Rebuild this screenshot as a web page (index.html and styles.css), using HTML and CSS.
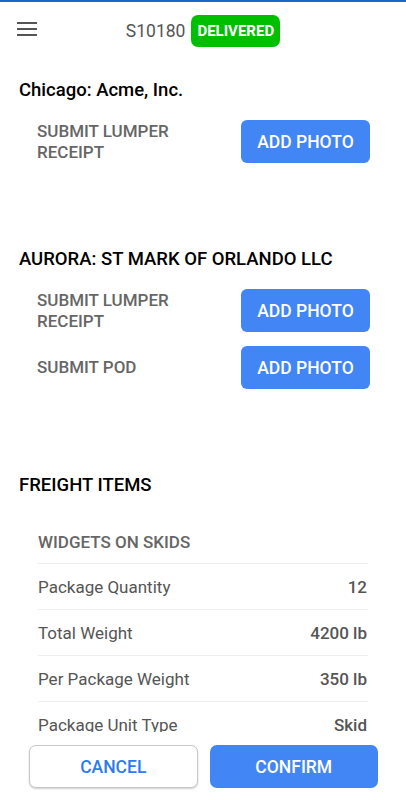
FILE: index.html
```html
<!DOCTYPE html>
<html lang="en">
<head>
    <meta charset="UTF-8">
    <meta name="viewport" content="width=device-width, initial-scale=1.0">
    <title>S10180</title>
    <link rel="stylesheet" href="styles.css">
</head>
<body>
    <div class="topbar">
        <button class="menu">
            <svg width="20" height="14" viewBox="0 0 20 14">
                <rect x="0" y="0" width="20" height="2" fill="#555"/>
                <rect x="0" y="6" width="20" height="2" fill="#555"/>
                <rect x="0" y="12" width="20" height="2" fill="#555"/>
            </svg>
        </button>
        <div class="title">
            <span class="shipment">S10180</span>
            <span class="badge">DELIVERED</span>
        </div>
    </div>

    <div class="content">
        <div class="stop">
            <h2>Chicago: Acme, Inc.</h2>
            <div class="doc-row">
                <span class="doc-label">SUBMIT LUMPER RECEIPT</span>
                <button class="btn-photo">ADD PHOTO</button>
            </div>
        </div>

        <div class="stop">
            <h2>AURORA: ST MARK OF ORLANDO LLC</h2>
            <div class="doc-row">
                <span class="doc-label">SUBMIT LUMPER RECEIPT</span>
                <button class="btn-photo">ADD PHOTO</button>
            </div>
            <div class="doc-row">
                <span class="doc-label">SUBMIT POD</span>
                <button class="btn-photo">ADD PHOTO</button>
            </div>
        </div>

        <div class="stop">
            <h2>FREIGHT ITEMS</h2>
            <div class="freight">
                <div class="freight-row freight-head">WIDGETS ON SKIDS</div>
                <div class="freight-row">
                    <span>Package Quantity</span>
                    <span class="value">12</span>
                </div>
                <div class="freight-row">
                    <span>Total Weight</span>
                    <span class="value">4200 lb</span>
                </div>
                <div class="freight-row">
                    <span>Per Package Weight</span>
                    <span class="value">350 lb</span>
                </div>
                <div class="freight-row">
                    <span>Package Unit Type</span>
                    <span class="value">Skid</span>
                </div>
                <div class="freight-row">
                    <span>Hazardous</span>
                    <span class="value">No</span>
                </div>
            </div>
        </div>
    </div>

    <div class="actions">
        <button class="btn-cancel">CANCEL</button>
        <button class="btn-confirm">CONFIRM</button>
    </div>
</body>
</html>
```

FILE: styles.css
```css
html{
    background-color: white;
}
body{
    margin: 0;
    font-family: Roboto, "Liberation Sans", sans-serif;
    color: #222;
}
button{
    font-family: Roboto, "Liberation Sans", sans-serif;
    cursor: pointer;
}
.topbar{
    border-top: 2px solid #1769c4;
    height: 58px;
    display: flex;
    align-items: center;
    justify-content: center;
    position: relative;
}
.menu{
    position: absolute;
    left: 17px;
    top: 20px;
    border: none;
    background: none;
    padding: 0;
    display: flex;
}
.title{
    display: flex;
    align-items: center;
    gap: 6px;
}
.shipment{
    font-size: 17.5px;
    color: #555;
}
.badge{
    background-color: #00bf00;
    color: white;
    font-weight: 700;
    font-size: 15px;
    border-radius: 7px;
    height: 32px;
    line-height: 32px;
    padding: 0 6px;
}
.content{
    padding: 18px 19px 90px 19px;
}
.stop{
    margin-bottom: 84px;
}
h2{
    font-size: 18.5px;
    font-weight: 500;
    line-height: 24px;
    margin: 0 0 18px 0;
    color: #000;
}
.doc-row{
    display: flex;
    align-items: center;
    justify-content: space-between;
    margin: 0 17px 14px 18px;
}
.doc-label{
    font-size: 17px;
    font-weight: 500;
    color: #666;
    line-height: 21px;
    max-width: 170px;
}
.btn-photo{
    width: 129px;
    height: 43px;
    border: none;
    border-radius: 6px;
    background-color: #4285f4;
    color: white;
    font-size: 17.5px;
    font-weight: 500;
}
.freight{
    margin: 21px 19px 0 19px;
}
.freight-row{
    height: 44px;
    border-bottom: 1px solid #eee;
    display: flex;
    align-items: center;
    justify-content: space-between;
    font-size: 17px;
    color: #555;
    padding-top: 1px;
}
.freight-head{
    font-weight: 500;
    color: #666;
    padding-top: 3px;
    height: 42px;
}
.value{
    font-weight: 500;
    padding-right: 1px;
}
.actions{
    position: fixed;
    left: 0;
    right: 0;
    bottom: 0;
    background-color: white;
    padding: 13px 28px 12px 29px;
    display: grid;
    grid-template-columns: 1fr 1fr;
    gap: 12px;
}
.btn-cancel, .btn-confirm{
    height: 43px;
    border-radius: 7px;
    font-size: 17.5px;
    font-weight: 500;
}
.btn-cancel{
    background-color: white;
    border: 1px solid #c8c8c8;
    color: #2a7cf0;
    box-shadow: 0 1px 2px rgba(0, 0, 0, 0.2);
}
.btn-confirm{
    background-color: #4285f4;
    border: none;
    color: white;
}
```
